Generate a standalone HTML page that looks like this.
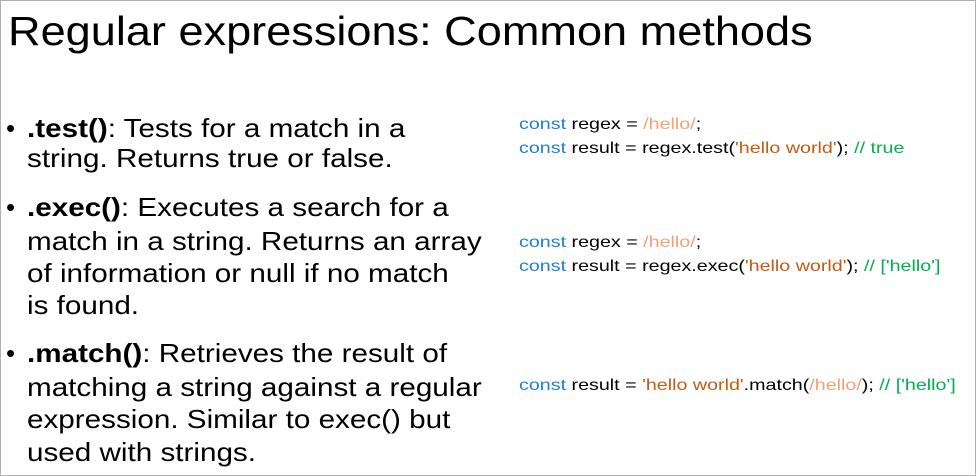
<!DOCTYPE html>
<html><head><style>
body{margin:0;width:976px;height:476px;overflow:hidden;background:#fff;font-family:"Liberation Sans",sans-serif;color:#000}
.frame{position:absolute;left:0;top:0;width:974px;height:474px;border:1px solid #b0b0b0}
.t{position:absolute;left:8px;top:8px;font-size:41px;white-space:nowrap;transform:scaleX(1.1);transform-origin:0 0}
.l{position:absolute;left:27px;font-size:26px;white-space:nowrap;transform:scaleX(1.14);transform-origin:0 0}
.b{position:absolute;left:6px;font-size:26px}
.c{position:absolute;left:519px;font-size:16px;white-space:nowrap;transform:scaleX(1.23);transform-origin:0 0}
.k{color:#1f7fd6}.r{color:#f2a27a}.s{color:#c55a11}.g{color:#00b050}
</style></head><body>
<div class="frame"></div>
<div class="t">Regular expressions: Common methods</div>
<div class="b" style="top:113px">•</div>
<div class="l" style="top:113px"><b>.test()</b>: Tests for a match in a</div>
<div class="l" style="top:143px">string. Returns true or false.</div>
<div class="b" style="top:192px">•</div>
<div class="l" style="top:192px"><b>.exec()</b>: Executes a search for a</div>
<div class="l" style="top:226px">match in a string. Returns an array</div>
<div class="l" style="top:258px">of information or null if no match</div>
<div class="l" style="top:290px">is found.</div>
<div class="b" style="top:338px">•</div>
<div class="l" style="top:338px"><b>.match()</b>: Retrieves the result of</div>
<div class="l" style="top:372px">matching a string against a regular</div>
<div class="l" style="top:404px">expression. Similar to exec() but</div>
<div class="l" style="top:437px">used with strings.</div>
<div class="c" style="top:116px"><span class="k">const</span> regex = <span class="r">/hello/</span>;</div>
<div class="c" style="top:140px"><span class="k">const</span> result = regex.test(<span class="s">'hello world'</span>); <span class="g">// true</span></div>
<div class="c" style="top:234px"><span class="k">const</span> regex = <span class="r">/hello/</span>;</div>
<div class="c" style="top:258px"><span class="k">const</span> result = regex.exec(<span class="s">'hello world'</span>); <span class="g">// ['hello']</span></div>
<div class="c" style="top:377px"><span class="k">const</span> result = <span class="s">'hello world'</span>.match(<span class="r">/hello/</span>); <span class="g">// ['hello']</span></div>
</body></html>
